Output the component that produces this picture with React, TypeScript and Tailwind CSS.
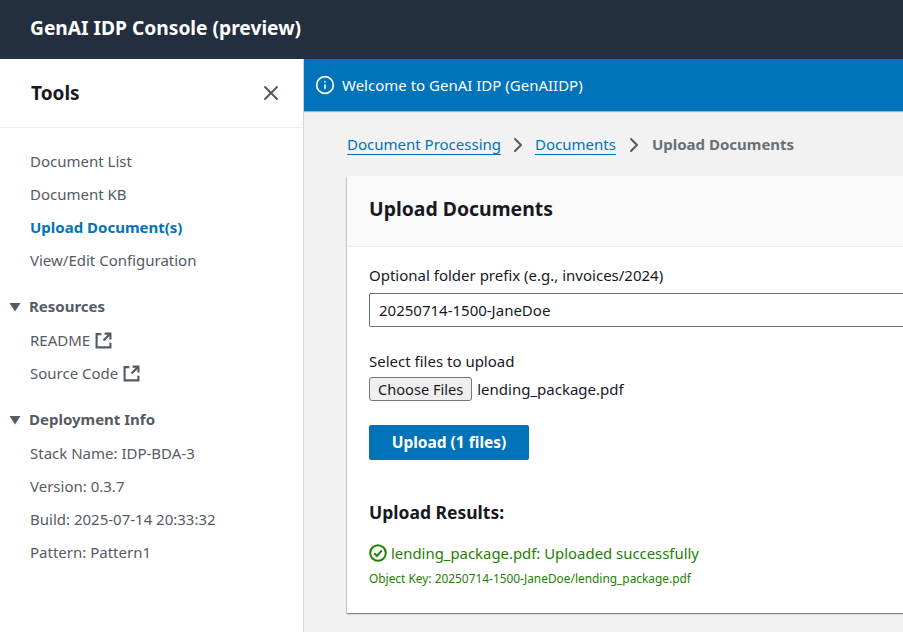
import { useState } from "react";
import { X, Info, ChevronRight } from "lucide-react";

const font = "[font-family:'Noto_Sans',sans-serif]";

function ExternalIcon() {
  return (
    <svg width="17" height="17" viewBox="0 0 16 16" fill="none" stroke="#545b64" strokeWidth="2" className="ml-[5px]">
      <path d="M6 2H1.5v12.5h13V10" />
      <path d="M9 1.5h5.5V7" />
      <path d="M14 2 8 8" />
    </svg>
  );
}

function SectionHeader({ label }: { label: string }) {
  return (
    <div className="mb-[1px] flex h-[33px] items-center text-[15px] font-bold text-[#545b64]">
      <svg width="12" height="10" viewBox="0 0 12 10" className="ml-[9px] mr-[8px]">
        <path d="M0.5 1h11L6 9.5z" fill="#545b64" />
      </svg>
      {label}
    </div>
  );
}

function NavItem({ label, active, external }: { label: string; active?: boolean; external?: boolean }) {
  return (
    <div
      className={`flex h-[33px] items-center pl-[30px] text-[15px] ${
        active ? "font-bold text-[#0073bb]" : "text-[#545b64]"
      }`}
    >
      {label}
      {external && <ExternalIcon />}
    </div>
  );
}

export default function App() {
  const [prefix, setPrefix] = useState("20250714-1500-JaneDoe");

  return (
    <div className={`${font} flex h-[632px] w-full flex-col overflow-hidden bg-[#f2f2f2] text-[#16191f]`}>
      <header className="flex h-[59px] shrink-0 items-center bg-[#232f3e] pb-[3px] pl-[30px] text-[19.2px] font-bold text-white">
        GenAI IDP Console (preview)
      </header>

      <div className="flex min-h-0 flex-1">
        <aside className="w-[304px] shrink-0 border-r border-[#d5dbdb] bg-white">
          <div className="flex h-[69px] items-center justify-between border-b border-[#eaeded] pl-[31px] pr-[20px]">
            <h2 className="text-[19px] font-bold">Tools</h2>
            <X size={24} strokeWidth={2} className="text-[#545b64]" />
          </div>
          <nav className="pt-[17px]">
            <NavItem label="Document List" />
            <NavItem label="Document KB" />
            <NavItem label="Upload Document(s)" active />
            <NavItem label="View/Edit Configuration" />
            <div className="mt-[13px]">
              <SectionHeader label="Resources" />
              <NavItem label="README" external />
              <NavItem label="Source Code" external />
            </div>
            <div className="mt-[13px]">
              <SectionHeader label="Deployment Info" />
              <NavItem label="Stack Name: IDP-BDA-3" />
              <NavItem label="Version: 0.3.7" />
              <NavItem label="Build: 2025-07-14 20:33:32" />
              <NavItem label="Pattern: Pattern1" />
            </div>
          </nav>
        </aside>

        <main className="min-w-0 flex-1">
          <div className="flex h-[52px] items-center bg-[#0073bb] pl-[11px] text-[15px] text-white shadow-[0_1px_1px_rgba(0,28,36,0.3)]">
            <Info size={20} strokeWidth={2} className="mr-[7px]" />
            Welcome to GenAI IDP (GenAIIDP)
          </div>

          <div className="flex h-[65px] items-center pl-[43px] pt-[2px] text-[15px]">
            <a className="border-b border-[#0073bb] leading-[19px] text-[#0073bb]">Document Processing</a>
            <ChevronRight size={24} strokeWidth={2} className="mx-[5px] text-[#545b64]" />
            <a className="border-b border-[#0073bb] leading-[19px] text-[#0073bb]">Documents</a>
            <ChevronRight size={24} strokeWidth={2} className="mx-[6px] text-[#545b64]" />
            <span className="font-bold text-[#687078]">Upload Documents</span>
          </div>

          <section className="ml-[43px] w-[700px] bg-white shadow-[0_1px_1px_0_rgba(0,28,36,0.3),1px_1px_1px_0_rgba(0,28,36,0.15),-1px_1px_1px_0_rgba(0,28,36,0.15)]">
            <div className="flex h-[71px] items-center border-b border-[#eaeded] bg-[#fafafa] pb-[5px] pl-[22px]">
              <h1 className="text-[19.4px] font-bold">Upload Documents</h1>
            </div>

            <div className="h-[366px] pl-[22px] pt-[17px]">
              <label className="block h-[29px] text-[15px] leading-[22px]">
                Optional folder prefix (e.g., invoices/2024)
              </label>
              <input
                value={prefix}
                onChange={(e) => setPrefix(e.target.value)}
                className="h-[34px] w-full rounded-[2px] border border-[#687078] bg-white px-[9px] text-[15px] outline-none"
              />

              <div className="mt-[23px] text-[15px] leading-[22px]">Select files to upload</div>
              <div className="mt-[5px] flex items-center text-[15px]">
                <button className="h-[24px] rounded-[3px] border border-[#767676] bg-[#efefef] px-[8px] text-[14.6px] leading-none">
                  Choose Files
                </button>
                <span className="ml-[5px] leading-[20px]">lending_package.pdf</span>
              </div>

              <button className="mt-[24px] h-[35px] w-[160px] rounded-[2px] bg-[#0073bb] text-[15.5px] font-bold text-white">
                Upload (1 files)
              </button>

              <h3 className="mt-[39px] text-[17.5px] font-bold leading-[27px]">Upload Results:</h3>

              <div className="mt-[16px] flex items-center text-[14.9px] leading-[22px] text-[#1d8102]">
                <svg width="18" height="18" viewBox="0 0 18 18" fill="none" stroke="#1d8102" strokeWidth="2" className="mr-[4px]">
                  <circle cx="9" cy="9" r="7.8" />
                  <path d="M5.2 9.2 8 12l4.8-5.6" />
                </svg>
                lending_package.pdf: Uploaded successfully
              </div>
              <div className="mt-[6px] text-[11.9px] leading-[17px] text-[#1d8102]">
                Object Key: 20250714-1500-JaneDoe/lending_package.pdf
              </div>
            </div>
          </section>
        </main>
      </div>
    </div>
  );
}
